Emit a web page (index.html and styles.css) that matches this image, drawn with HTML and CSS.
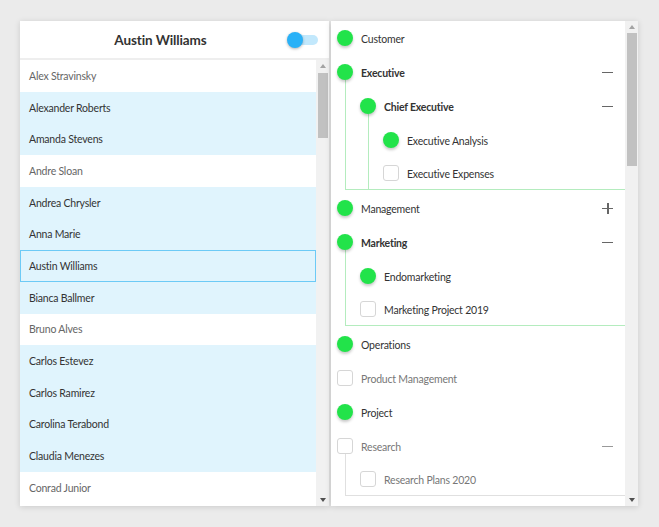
FILE: index.html
```html
<!DOCTYPE html>
<html>
<head>
<meta charset="utf-8">
<link rel="stylesheet" href="styles.css">
</head>
<body>
<div class="stage">
  <section class="panel panel-list">
    <header class="list-header">
      <h1 class="title">Austin Williams</h1>
      <div class="toggle"><span class="toggle-track"></span><span class="toggle-knob"></span></div>
    </header>
    <div class="list-body">
      <ul class="people">
        <li class="person">Alex Stravinsky</li>
        <li class="person selected">Alexander Roberts</li>
        <li class="person selected">Amanda Stevens</li>
        <li class="person">Andre Sloan</li>
        <li class="person selected">Andrea Chrysler</li>
        <li class="person selected">Anna Marie</li>
        <li class="person selected focused">Austin Williams</li>
        <li class="person selected">Bianca Ballmer</li>
        <li class="person">Bruno Alves</li>
        <li class="person selected">Carlos Estevez</li>
        <li class="person selected">Carlos Ramirez</li>
        <li class="person selected">Carolina Terabond</li>
        <li class="person selected">Claudia Menezes</li>
        <li class="person">Conrad Junior</li>
      </ul>
      <div class="scrollbar">
        <span class="arrow up"></span>
        <div class="track"><span class="thumb thumb-list"></span></div>
        <span class="arrow down"></span>
      </div>
    </div>
  </section>

  <section class="panel panel-tree">
    <div class="tree">
      <div class="node">
        <div class="row"><span class="dot"></span><span class="label">Customer</span></div>
      </div>
      <div class="node">
        <div class="row"><span class="dot"></span><span class="label strong">Executive</span><span class="expander minus"></span></div>
        <div class="children green boxed">
          <div class="node">
            <div class="row"><span class="dot"></span><span class="label strong">Chief Executive</span><span class="expander minus"></span></div>
            <div class="children green">
              <div class="node"><div class="row"><span class="dot"></span><span class="label">Executive Analysis</span></div></div>
              <div class="node"><div class="row tail"><span class="box"></span><span class="label">Executive Expenses</span></div></div>
            </div>
          </div>
        </div>
      </div>
      <div class="node">
        <div class="row"><span class="dot"></span><span class="label">Management</span><span class="expander plus"></span></div>
      </div>
      <div class="node">
        <div class="row"><span class="dot"></span><span class="label strong">Marketing</span><span class="expander minus"></span></div>
        <div class="children green boxed">
          <div class="node"><div class="row"><span class="dot"></span><span class="label">Endomarketing</span></div></div>
          <div class="node"><div class="row tail"><span class="box"></span><span class="label">Marketing Project 2019</span></div></div>
        </div>
      </div>
      <div class="node">
        <div class="row"><span class="dot"></span><span class="label">Operations</span></div>
      </div>
      <div class="node">
        <div class="row"><span class="box"></span><span class="label muted">Product Management</span></div>
      </div>
      <div class="node">
        <div class="row"><span class="dot"></span><span class="label">Project</span></div>
      </div>
      <div class="node">
        <div class="row"><span class="box"></span><span class="label muted">Research</span><span class="expander minus light"></span></div>
        <div class="children grey boxed">
          <div class="node"><div class="row tail"><span class="box"></span><span class="label muted">Research Plans 2020</span></div></div>
        </div>
      </div>
    </div>
    <div class="scrollbar">
      <span class="arrow up"></span>
      <div class="track"><span class="thumb thumb-tree"></span></div>
      <span class="arrow down"></span>
    </div>
  </section>
</div>
</body>
</html>
```

FILE: styles.css
```css
* { box-sizing: border-box; }
html, body { margin: 0; padding: 0; }
body {
  background: #ebebeb;
  font-family: "Lato", "Open Sans", sans-serif;
  color: #333;
  width: 659px;
  height: 527px;
  overflow: hidden;
}
.stage {
  display: flex;
  gap: 2px;
  padding: 21px 0 0 20px;
}
.panel {
  background: #fff;
  height: 485px;
  box-shadow: 0 1px 6px rgba(0,0,0,0.14);
  overflow: hidden;
}
.panel-list {
  width: 309px;
  display: flex;
  flex-direction: column;
}
.list-header {
  height: 39px;
  flex: none;
  display: flex;
  align-items: center;
  border-bottom: 2px solid #eeeeee;
  padding-left: 14px;
}
.title {
  flex: 1;
  margin: 0;
  padding-top: 1px;
  text-align: center;
  font-size: 13.5px;
  font-weight: 700;
  color: #333;
  letter-spacing: -0.1px;
}
.toggle {
  position: relative;
  width: 31px;
  height: 16px;
  margin-right: 11px;
  margin-top: 1px;
  flex: none;
}
.toggle-track {
  display: block;
  position: absolute;
  left: 1px;
  right: 0;
  top: 3px;
  height: 10px;
  border-radius: 5px;
  background: #c2e8fc;
}
.toggle-knob {
  position: absolute;
  left: 0;
  top: 0;
  width: 16px;
  height: 16px;
  border-radius: 50%;
  background: #29b1f7;
  box-shadow: 0 1px 3px rgba(0,0,0,0.3);
}
.list-body {
  flex: 1;
  display: flex;
  min-height: 0;
}
.people {
  list-style: none;
  margin: 0;
  padding: 0;
  flex: 1;
  overflow: hidden;
}
.person {
  height: 31.7px;
  display: flex;
  align-items: center;
  padding-left: 8px;
  font-size: 10.5px;
  letter-spacing: -0.2px;
  color: #666;
  border: 1px solid transparent;
}
.person.selected {
  background: #e0f4fd;
  color: #333;
}
.person.focused {
  border-color: #6ccaf6;
}
.scrollbar {
  width: 13px;
  flex: none;
  background: #f1f1f1;
  display: flex;
  flex-direction: column;
  align-items: center;
}
.arrow {
  flex: none;
  height: 12px;
  width: 13px;
  display: flex;
  align-items: center;
  justify-content: center;
}
.arrow::before {
  content: "";
  border-left: 3.5px solid transparent;
  border-right: 3.5px solid transparent;
}
.arrow.up::before { border-bottom: 4px solid #a3a3a3; }
.arrow.down::before { border-top: 4px solid #505050; }
.track {
  flex: 1;
  width: 100%;
  display: flex;
  flex-direction: column;
  align-items: center;
}
.thumb {
  width: 10px;
  background: #c1c1c1;
}
.thumb-list { margin-top: 1px; height: 65px; }
.thumb-tree { margin-top: 0; height: 133px; }

.panel-tree {
  width: 307px;
  display: flex;
}
.tree {
  flex: 1;
  overflow: hidden;
}
.row {
  height: 34px;
  display: flex;
  align-items: center;
  padding-left: 6px;
  padding-right: 12px;
  font-size: 10.5px;
  letter-spacing: -0.2px;
}
.row.tail { height: 32px; }
.dot {
  width: 16px;
  height: 16px;
  border-radius: 50%;
  background: #22e34a;
  box-shadow: 0 2px 3px rgba(0,0,0,0.22);
  flex: none;
}
.box {
  width: 16px;
  height: 16px;
  border-radius: 3px;
  border: 1px solid #d6d6d6;
  background: #fff;
  flex: none;
}
.label {
  margin-left: 8px;
  padding-top: 1px;
  flex: 1;
  color: #333;
}
.label.strong { font-weight: 700; }
.label.muted { color: #777; }
.expander {
  width: 11px;
  height: 11px;
  position: relative;
  flex: none;
}
.expander::before {
  content: "";
  position: absolute;
  left: 0;
  right: 0;
  top: 5px;
  height: 1.5px;
  background: #666;
}
.expander.plus::after {
  content: "";
  position: absolute;
  top: 0;
  bottom: 0;
  left: 5px;
  width: 1.5px;
  background: #666;
}
.expander.light::before { background: #999; }
.children {
  margin-left: 14px;
  margin-top: -9px;
  padding-top: 9px;
  padding-left: 8px;
  border-left: 1px solid #b4ecbe;
}
.children.boxed {
  border-bottom: 1px solid #b4ecbe;
  margin-bottom: 1px;
}
.children.grey,
.children.grey.boxed {
  border-color: #e0e0e0;
}
```
